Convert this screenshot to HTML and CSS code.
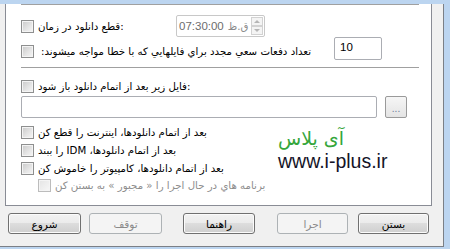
FILE: index.html
```html
<!DOCTYPE html>
<html>
<head>
<meta charset="utf-8">
<link rel="stylesheet" href="styles.css">
</head>
<body>
<div class="win">
  <div class="client">
    <div class="panel">
      <div class="sep sep1"></div>
      <div class="row r1">
        <div class="opt w155"><span class="cb"></span><span class="lt" dir="ltr">قطع دانلود در زمان:</span></div>
        <div class="timebox">
          <span class="tval">07:30:00</span><span class="ampm">ق.ظ</span>
          <span class="spin"><span class="sp"><span class="arr up"></span></span><span class="sp"><span class="arr dn"></span></span></span>
        </div>
      </div>
      <div class="row r2">
        <div class="opt w313 top"><span class="cb"></span><span class="lt rt" dir="rtl">تعداد دفعات سعي مجدد براي فايلهايي كه با خطا مواجه ميشوند:</span></div>
        <div class="numbox">10</div>
      </div>
      <div class="sep sep2"></div>
      <div class="row r3">
        <div class="opt"><span class="cb"></span><span class="lt" dir="ltr">فايل زير بعد از اتمام دانلود باز شود:</span></div>
      </div>
      <div class="row r4">
        <div class="field"></div>
        <div class="browse">...</div>
      </div>
      <div class="bottom">
        <div class="opts">
          <div class="opt"><span class="cb"></span><span class="lt" dir="rtl">بعد از اتمام دانلودها، اينترنت را قطع كن</span></div>
          <div class="opt"><span class="cb"></span><span class="lt" dir="rtl">بعد از اتمام دانلودها، IDM را ببند</span></div>
          <div class="opt"><span class="cb"></span><span class="lt" dir="rtl">بعد از اتمام دانلودها، كامپيوتر را خاموش كن</span></div>
          <div class="opt sub dis"><span class="cb"></span><span class="lt" dir="rtl">برنامه هاي در حال اجرا را « مجبور » به بستن كن</span></div>
        </div>
        <div class="logo">
          <div class="logo-fa" dir="rtl">آی پلاس</div>
          <div class="logo-en">www.i-plus.ir</div>
        </div>
      </div>
    </div>
    <div class="buttons">
      <div class="btn b1" dir="rtl">شروع</div>
      <div class="btn b2 off" dir="rtl">توقف</div>
      <div class="btn b3" dir="rtl">راهنما</div>
      <div class="btn b4 off" dir="rtl">اجرا</div>
      <div class="btn b5" dir="rtl">بستن</div>
    </div>
  </div>
</div>
</body>
</html>
```

FILE: styles.css
```css
html, body {
  margin: 0;
  padding: 0;
}
body {
  background: #bcd5f0;
  font-family: Tahoma, "DejaVu Sans", sans-serif;
  font-size: 11px;
  color: #000;
}
.win {
  width: 450px;
  height: 249px;
  overflow: hidden;
  background: #bcd5f0;
}
.client {
  width: 443px;
  height: 242px;
  background: #f0f0f0;
  border-right: 1px solid #7b7f86;
  border-bottom: 1px solid #7b7f86;
}
.panel {
  margin-left: 5px;
  width: 425px;
  height: 201px;
  background: #fff;
  border: 1px solid #898c95;
  border-top: none;
}
.sep {
  height: 1px;
  background: #a0a0a0;
  margin-left: 15px;
  width: 398px;
}
.sep1 { margin-top: 4px; }
.sep2 { margin-top: 8px; }
.row {
  display: flex;
  align-items: center;
  padding-left: 15px;
}
.r1 { margin-top: 10px; height: 22px; }
.r2 { height: 22px; align-items: flex-start; }
.r3 { margin-top: 12px; height: 13px; }
.r4 { margin-top: 3px; height: 22px; gap: 8px; }
.opt {
  display: flex;
  align-items: center;
  height: 13px;
  gap: 4px;
  white-space: nowrap;
}
.w155 { width: 155px; }
.w313 { width: 313px; }
.top { margin-top: 8px; }
.lt { line-height: 13px; font-size: 10.2px; }
.rt { margin-left: 3px; }
.cb {
  flex: none;
  width: 13px;
  height: 13px;
  box-sizing: border-box;
  border: 1px solid #8e8f8f;
  background: linear-gradient(135deg, #c9c9c9 0%, #e6e6e6 60%, #f6f6f6 100%);
  box-shadow: inset 0 0 0 1px #f4f4f4;
}
.dis .cb {
  border-color: #bcbcbc;
  background: linear-gradient(135deg, #e4e4e4, #f7f7f7);
}
.dis .lt { color: #8d8d8d; }
.timebox {
  width: 89px;
  height: 22px;
  box-sizing: border-box;
  border: 1px solid #c8c8c8;
  border-radius: 2px;
  display: flex;
  align-items: center;
  padding-left: 2px;
  color: #6d6d6d;
}
.tval {
  font-family: "Liberation Sans", Arial, sans-serif;
  font-size: 11.5px;
}
.ampm {
  margin-left: 4px;
  color: #8a8a8a;
  font-size: 10.2px;
}
.spin {
  margin-left: auto;
  margin-right: 1px;
  display: flex;
  flex-direction: column;
  gap: 0;
}
.sp {
  width: 12px;
  height: 9px;
  box-sizing: border-box;
  border: 1px solid #d2d2d2;
  background: #f4f4f4;
  display: flex;
  align-items: center;
  justify-content: center;
}
.arr {
  width: 0;
  height: 0;
  border-left: 3px solid transparent;
  border-right: 3px solid transparent;
}
.arr.up { border-bottom: 3px solid #b5b5b5; }
.arr.dn { border-top: 3px solid #b5b5b5; }
.numbox {
  width: 48px;
  height: 23px;
  box-sizing: border-box;
  border: 1px solid #abadb3;
  border-radius: 2px;
  padding: 3px 0 0 5px;
  font-family: "Liberation Sans", Arial, sans-serif;
  font-size: 11.5px;
  line-height: 13px;
}
.field {
  width: 356px;
  height: 22px;
  box-sizing: border-box;
  border: 1px solid #abadb3;
  border-radius: 2px;
}
.browse {
  width: 22px;
  height: 22px;
  box-sizing: border-box;
  border: 1px solid #9a9a9a;
  border-radius: 2px;
  background: linear-gradient(#f6f6f6, #e4e4e4);
  color: #6b7a99;
  font-family: "Liberation Sans", Arial, sans-serif;
  font-size: 10px;
  display: flex;
  align-items: flex-end;
  justify-content: center;
  padding-bottom: 4px;
  line-height: 8px;
}
.bottom {
  margin-top: 8px;
  display: flex;
  padding-left: 15px;
}
.opts {
  width: 257px;
  display: flex;
  flex-direction: column;
  gap: 5px;
}
.opts .sub {
  margin-top: -1px;
  padding-left: 17px;
}
.logo {
  padding-top: 0;
}
.logo-fa {
  color: #35a63b;
  font-family: "DejaVu Sans", sans-serif;
  font-size: 19px;
  line-height: 24px;
  text-align: left;
  width: 72px;
}
.logo-en {
  color: #141428;
  font-family: "Liberation Sans", Arial, sans-serif;
  font-size: 19.5px;
  line-height: 22px;
}
.buttons {
  margin-top: 7px;
  padding-left: 8px;
  display: flex;
}
.btn {
  height: 21px;
  box-sizing: border-box;
  border: 1px solid #707070;
  border-radius: 3px;
  background: linear-gradient(#f2f2f2 0%, #ebebeb 50%, #dddddd 50%, #cfcfcf 100%);
  box-shadow: inset 0 0 0 1px #fbfbfb;
  display: flex;
  align-items: center;
  justify-content: center;
  font-size: 10.5px;
  color: #000;
}
.btn.off {
  border-color: #adb2b5;
  background: #f4f4f4;
  box-shadow: none;
  color: #8a8a8a;
}
.b1 { width: 73px; }
.b2 { width: 73px; margin-left: 8px; }
.b3 { width: 72px; margin-left: 21px; }
.b4 { width: 71px; margin-left: 22px; }
.b5 { width: 71px; margin-left: 10px; }
```
